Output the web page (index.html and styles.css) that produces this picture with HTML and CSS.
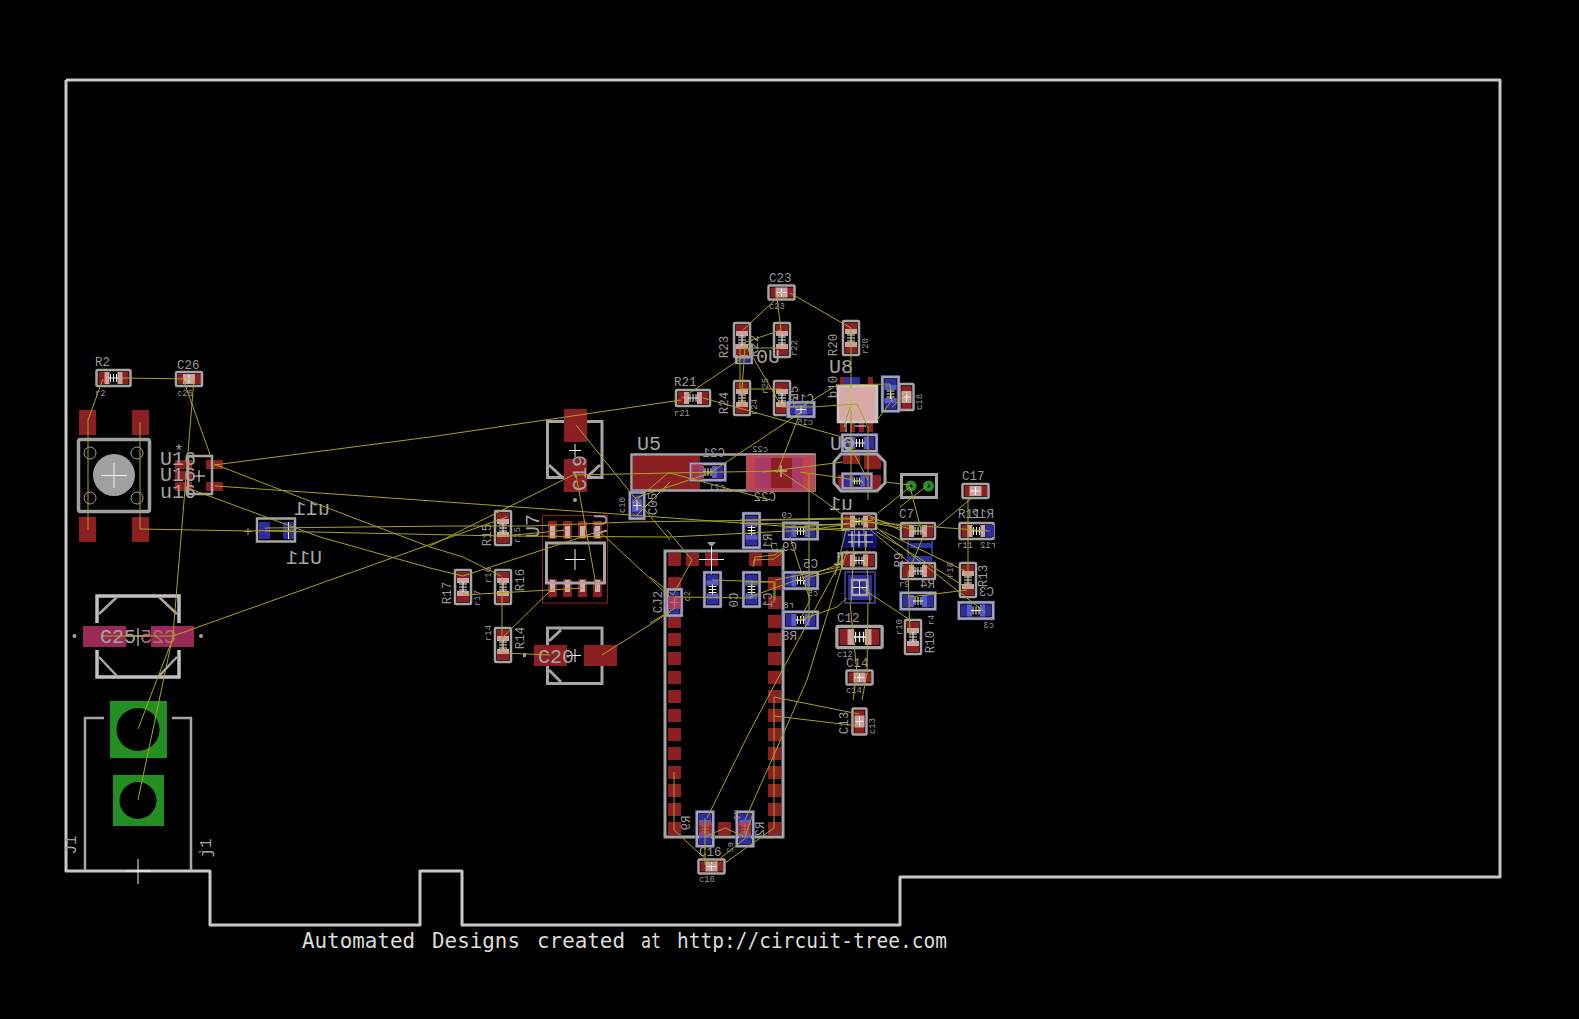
FILE: index.html
```html
<!DOCTYPE html>
<html lang="en">
<head>
<meta charset="utf-8">
<title>Circuit board layout</title>
<link rel="stylesheet" href="styles.css">
</head>
<body>
<svg class="board" width="1579" height="1019" viewBox="0 0 1579 1019" xmlns="http://www.w3.org/2000/svg">
<defs>
  <g id="cross"><path class="wh" d="M-5 0H5M0-4V4"/></g>
  <g id="hash"><path class="wh" d="M-5 0H5M-3-4V4M0-4V4M3-4V4"/></g>
  <g id="r">
    <rect class="red" x="-15" y="-6" width="30" height="12"/>
    <rect class="pnk" x="-9" y="-6" width="18" height="12"/>
    <rect class="blk" x="-4" y="-6" width="8" height="12"/>
    <rect class="sl2" x="-17" y="-8" width="34" height="16" rx="1"/>
    <use href="#hash"/>
  </g>
  <g id="b">
    <rect class="blu" x="-15" y="-6" width="30" height="12"/>
    <rect class="lbl" x="-9" y="-6" width="18" height="12"/>
    <rect class="blk" x="-4" y="-6" width="8" height="12"/>
    <rect class="blo" x="-18" y="-9" width="36" height="18"/>
    <rect class="slb" x="-17" y="-8" width="34" height="16"/>
    <use href="#hash"/>
  </g>
  <g id="c">
    <rect class="red" x="-11" y="-5" width="23" height="10"/>
    <rect class="pnk" x="-6" y="-5" width="12" height="10"/>
    <rect class="sl2" x="-13" y="-7" width="26" height="14" rx="1"/>
    <use href="#cross"/>
  </g>
  <g id="cb">
    <rect class="blu" x="-11" y="-5" width="23" height="10"/>
    <rect class="lbl" x="-6" y="-5" width="12" height="10"/>
    <rect class="blo" x="-14" y="-8" width="28" height="16"/>
    <rect class="slb" x="-13" y="-7" width="26" height="14"/>
    <use href="#cross"/>
  </g>
</defs>

<!-- board outline -->
<polyline class="edge" points="66,80 1500,80 1500,877 900,877 900,925 462,925 462,871 420,871 420,925 210,925 210,871 66,871 66,80"/>

<!-- module footprint pads -->
<g class="red">
  <rect x="668" y="553" width="13" height="13"/><rect x="686" y="553" width="13" height="13"/><rect x="705" y="553" width="13" height="13"/><rect x="749" y="553" width="13" height="13"/><rect x="768" y="553" width="13" height="13"/>
  <rect x="668" y="577" width="13" height="13"/><rect x="668" y="596" width="13" height="13"/><rect x="668" y="615" width="13" height="13"/><rect x="668" y="633" width="13" height="13"/><rect x="668" y="652" width="13" height="13"/><rect x="668" y="671" width="13" height="13"/><rect x="668" y="690" width="13" height="13"/><rect x="668" y="709" width="13" height="13"/><rect x="668" y="728" width="13" height="13"/><rect x="668" y="747" width="13" height="13"/><rect x="668" y="766" width="13" height="13"/><rect x="668" y="784" width="13" height="13"/><rect x="668" y="803" width="13" height="13"/><rect x="668" y="822" width="13" height="13"/>
  <rect x="768" y="577" width="13" height="13"/><rect x="768" y="596" width="13" height="13"/><rect x="768" y="615" width="13" height="13"/><rect x="768" y="633" width="13" height="13"/><rect x="768" y="652" width="13" height="13"/><rect x="768" y="671" width="13" height="13"/><rect x="768" y="690" width="13" height="13"/><rect x="768" y="709" width="13" height="13"/><rect x="768" y="728" width="13" height="13"/><rect x="768" y="747" width="13" height="13"/><rect x="768" y="766" width="13" height="13"/><rect x="768" y="784" width="13" height="13"/><rect x="768" y="803" width="13" height="13"/><rect x="768" y="822" width="13" height="13"/>
  <rect x="718" y="822" width="13" height="13"/>
</g>
<rect class="sl3" x="665" y="551" width="118" height="286"/>
<path class="gfill" d="M707 542h9l-4.500 5z"/>
<path class="sl1" d="M711.500 547V575"/>
<path class="wh" d="M699 559.500H724M711.500 547V572"/>

<!-- push button -->
<g class="red">
  <rect x="79" y="410" width="17" height="25"/><rect x="132" y="410" width="17" height="25"/>
  <rect x="79" y="517" width="17" height="25"/><rect x="132" y="517" width="17" height="25"/>
</g>
<rect class="sl4" x="78.500" y="439.500" width="71" height="72" rx="2"/>
<circle class="gfill" cx="114" cy="475" r="21"/>
<g class="sl1"><circle cx="90" cy="453" r="6"/><circle cx="137" cy="453" r="6"/><circle cx="90" cy="498" r="6"/><circle cx="137" cy="498" r="6"/></g>
<path class="wh" d="M101 475.500H127M114 463V488"/>

<!-- U16 cluster -->
<g class="red">
  <rect x="206" y="460" width="17" height="9"/><rect x="206" y="482" width="17" height="9"/>
  <rect x="175" y="460" width="17" height="9"/><rect x="175" y="471" width="17" height="9"/><rect x="175" y="482" width="17" height="9"/>
</g>
<rect class="sl2" x="188" y="456" width="24" height="38"/>
<path class="wh" d="M193 476H205M199 470V482"/>

<!-- U11 bottom part -->
<rect class="blu" x="259" y="522" width="11" height="17"/><rect class="blu" x="283" y="522" width="11" height="17"/>
<rect class="sl2" x="257" y="518.500" width="38" height="23"/>
<path class="wh" d="M288.500 522V539"/>
<path class="sl1" d="M244 531.500H252M248 528V535"/>

<!-- C25 capacitor -->
<rect class="mag" x="83" y="626" width="43" height="21"/><rect class="mag" x="151" y="626" width="43" height="21"/>
<path class="sl3w" d="M97 623V596H179V623M97 650V677H179V650"/>
<path class="sl2" d="M99 614L117 597M159 597L177 614M99 657L117 676M159 676L177 657"/>
<circle class="gfill" cx="74.500" cy="636" r="2"/><circle class="gfill" cx="201" cy="636" r="2"/>
<path class="wh" d="M126 636H150M138 628V646"/>

<!-- J1 -->
<path class="sl2" d="M85 870V718H104M172 718H191V870"/>
<rect class="grn" x="110" y="701" width="57" height="57"/><circle class="blk" cx="138" cy="729.500" r="21.500"/>
<rect class="grn" x="113" y="775" width="51" height="51"/><circle class="blk" cx="138" cy="800.500" r="18.500"/>
<path class="wh" d="M126 871H151M138 859V884"/>

<!-- C19 / C20 / U7 -->
<path class="sl3" d="M564 421.500H547.500V477.500H564M587 421.500H602V477.500H587M549 465L562 477M600 465L587 477"/>
<rect class="red" x="564" y="409" width="23" height="33"/><rect class="red" x="564" y="459" width="23" height="33"/>
<path class="wh" d="M569 450.500H581M575 444V457"/>
<circle class="gfill" cx="575" cy="500" r="2"/>

<rect class="red1" x="542.500" y="515.500" width="65" height="87.500"/>
<g class="red">
  <rect x="548" y="521" width="9" height="18"/><rect x="563" y="521" width="9" height="18"/><rect x="578" y="521" width="9" height="18"/><rect x="593" y="521" width="9" height="18"/>
  <rect x="548" y="579" width="9" height="18"/><rect x="563" y="579" width="9" height="18"/><rect x="578" y="579" width="9" height="18"/><rect x="593" y="579" width="9" height="18"/>
</g>
<g class="pale">
  <rect x="550" y="526" width="5" height="12"/><rect x="565" y="526" width="5" height="12"/><rect x="580" y="526" width="5" height="12"/><rect x="595" y="526" width="5" height="12"/>
  <rect x="550" y="580" width="5" height="12"/><rect x="565" y="580" width="5" height="12"/><rect x="580" y="580" width="5" height="12"/><rect x="595" y="580" width="5" height="12"/>
</g>
<rect class="sl3" x="546.500" y="543" width="58" height="40"/>
<path class="wh" d="M565 559.500H585M575 549V570"/>

<rect class="red" x="534" y="645" width="33" height="21"/><rect class="red" x="584" y="645" width="33" height="21"/>
<path class="sl3" d="M547.500 645V628H602V645M547.500 666V683.500H602V666M549 641L561 630M549 670L561 682"/>
<path class="wh" d="M569 655.500H581M575 649V662"/>
<rect class="gfill" x="523" y="653" width="3" height="4"/>

<!-- U5 and C22 -->
<rect class="red" x="633" y="456" width="67" height="34"/>
<rect class="sl2" x="631.500" y="454.500" width="183" height="36"/>
<rect class="hot1" x="746" y="455" width="69" height="36"/>
<rect class="hot2" x="750" y="458" width="60" height="31"/>
<rect class="mag2" x="755" y="458" width="17" height="30"/>
<rect class="red" x="771" y="458" width="21" height="30"/>
<rect class="mag2" x="792" y="458" width="11" height="30"/>
<path class="wh" d="M775 471H787M781 465V477"/>

<!-- U8 -->
<g class="red">
  <rect x="840" y="377" width="5" height="8"/><rect x="868" y="377" width="5" height="8"/>
  <rect x="840" y="422" width="5" height="10"/><rect x="850" y="422" width="5" height="10"/><rect x="859" y="422" width="5" height="10"/><rect x="868" y="422" width="5" height="10"/>
</g>
<rect class="blu" x="844" y="377" width="16" height="8"/>
<rect class="pale2" x="838" y="385" width="39" height="37"/>
<rect class="slp" x="838" y="386" width="39" height="36"/>
<path class="wh" d="M846 422V432M855 426H866M851 388V410"/>

<!-- U6 octagon -->
<g class="red">
  <rect x="843" y="455" width="17" height="9"/><rect x="864" y="455" width="17" height="14"/>
  <rect x="838" y="475" width="43" height="15"/>
</g>
<path class="sl3" d="M841 454H877L885 462V483L877 491H841L834 483V462Z"/>

<!-- header J2 -->
<rect class="sl3" x="901.500" y="474.500" width="35" height="23"/>
<circle class="grn" cx="911" cy="486" r="5.500"/><circle class="grn" cx="928.500" cy="486" r="5.500"/>
<circle class="blk" cx="911" cy="486" r="1.500"/><circle class="blk" cx="928.500" cy="486" r="1.500"/>

<!-- labels covered by the parts drawn after them -->
<g class="tl">
  <text transform="translate(853 510) scale(-1 1)">u1</text>
  <text transform="translate(857 565) scale(-1 1)">U1</text>
</g>

<!-- chip parts -->
<use href="#r" transform="translate(113.500 378)"/>
<use href="#c" transform="translate(189 379)"/>
<use href="#c" transform="translate(781.500 292.500)"/>
<use href="#r" transform="translate(503 528) rotate(90)"/>
<use href="#r" transform="translate(463 587) rotate(90)"/>
<use href="#r" transform="translate(503 587) rotate(90)"/>
<use href="#r" transform="translate(503 645) rotate(90)"/>
<use href="#b" transform="translate(744 354) rotate(90) scale(.55 .95)"/>
<use href="#r" transform="translate(742 340) rotate(90)"/>
<use href="#r" transform="translate(782 340) rotate(90)"/>
<use href="#r" transform="translate(851 338) rotate(90)"/>
<use href="#r" transform="translate(693 398)"/>
<use href="#r" transform="translate(742 398) rotate(90)"/>
<use href="#r" transform="translate(782 398) rotate(90)"/>
<use href="#cb" transform="translate(801 409.500)"/>
<use href="#b" transform="translate(890.500 394) rotate(90)"/>
<use href="#c" transform="translate(906.500 397) rotate(90)"/>
<use href="#b" transform="translate(859.500 443)"/>
<use href="#b" transform="translate(857 481) scale(.85 .9)"/>
<use href="#b" transform="translate(708 472)"/>
<rect class="mag3" x="691" y="464" width="12" height="16"/>
<use href="#cb" transform="translate(637 505.500) rotate(90)"/>
<use href="#r" transform="translate(918 531)"/>
<use href="#r" transform="translate(976.500 531)"/>
<rect class="blu" x="985" y="525" width="9" height="12"/>
<use href="#c" transform="translate(975.500 491)"/>
<use href="#r" transform="translate(859 521.500)"/>
<rect class="dot" x="842" y="530" width="35" height="18"/>
<path class="wh" d="M848 535H873M848 542H873M852 531V547M859 531V547M866 531V547"/>
<use href="#r" transform="translate(859 560.500)"/>
<rect class="blo" x="845" y="572" width="30" height="31"/>
<rect class="blu" x="848" y="575" width="24" height="25"/>
<rect class="sl2 blkf" x="852" y="580" width="15" height="15"/>
<path class="wh" d="M852 587.500H867M859.500 580V595"/>
<use href="#r" transform="translate(918 571)"/>
<rect class="blu" x="910" y="543" width="22" height="5"/><rect class="blu" x="907" y="556" width="25" height="6"/>
<path class="blo" d="M908 541V556M932 541V556"/>
<use href="#r" transform="translate(968 580) rotate(90)"/>
<use href="#b" transform="translate(976 610.500)"/>
<use href="#b" transform="translate(918 601)"/>
<use href="#r" transform="translate(913 637) rotate(90)"/>
<use href="#r" transform="translate(859.500 637) scale(1.33 1.33)"/>
<use href="#c" transform="translate(859.500 677.500)"/>
<use href="#c" transform="translate(859.500 721.500) rotate(90)"/>
<use href="#c" transform="translate(711.500 866.500)"/>
<use href="#b" transform="translate(705 829) rotate(90)"/>
<use href="#b" transform="translate(745 829) rotate(90)"/>
<rect class="mag3" x="699" y="822" width="13" height="13"/><rect class="mag3" x="738" y="822" width="13" height="13"/>
<use href="#b" transform="translate(712.500 589.500) rotate(90)"/>
<use href="#b" transform="translate(751.500 589.500) rotate(90)"/>
<use href="#b" transform="translate(751.500 530.500) rotate(90)"/>
<use href="#cb" transform="translate(674.500 602.500) rotate(90)"/>
<rect class="mag3" x="668" y="596" width="13" height="13"/>
<use href="#b" transform="translate(800.500 580.500)"/>
<use href="#b" transform="translate(800.500 620)"/>
<use href="#b" transform="translate(800.500 531)"/>
<circle class="ring" cx="848" cy="443" r="5"/>

<!-- labels -->
<g class="tm">
  <text x="95" y="366">R2</text><text x="177" y="369">C26</text>
  <text x="769" y="282">C23</text><text x="674" y="386">R21</text>
  <text x="899" y="518">C7</text><text x="958" y="518">R11</text>
  <text x="962" y="480">C17</text><text x="837" y="622">C12</text>
  <text x="846" y="667">C14</text><text x="699" y="856">C16</text>
  <text transform="translate(491 535) rotate(-90)" class="mid">R15</text>
  <text transform="translate(451 593) rotate(-90)" class="mid">R17</text>
  <text transform="translate(524 580) rotate(-90)" class="mid">R16</text>
  <text transform="translate(524 638) rotate(-90)" class="mid">R14</text>
  <text transform="translate(662 602) rotate(-90)" class="mid">CJ2</text>
  <text transform="translate(728 347) rotate(-90)" class="mid">R23</text>
  <text transform="translate(728 403) rotate(-90)" class="mid">R24</text>
  <text transform="translate(837 345) rotate(-90)" class="mid">R20</text>
  <text transform="translate(798 397) rotate(-90)" class="mid">R25</text>
  <text transform="translate(758 346) rotate(-90)" class="mid">R22</text>
  <text transform="translate(848 723) rotate(-90)" class="mid">C13</text>
  <text transform="translate(987 576) rotate(-90)" class="mid">R13</text>
  <text transform="translate(934 642) rotate(-90)" class="mid">R10</text>
  <text transform="translate(657 504) rotate(-90)" class="mid">C05</text>
  <text transform="translate(837 387) rotate(-90)" class="mid">b10</text>
  <text transform="translate(994 518) scale(-1 1)">R12</text>
  <text transform="translate(818 568) scale(-1 1)">C5</text>
  <text transform="translate(797 551) scale(-1 1)">C9</text>
  <text transform="translate(797 640) scale(-1 1)">R8</text>
  <text transform="translate(994 596) scale(-1 1)">C3</text>
  <text transform="translate(935 588) scale(-1 1)">R4</text>
  <text transform="translate(814 403) scale(-1 1)">C15</text>
  <text transform="translate(725 457) scale(-1 1)">C21</text>
  <text transform="translate(776 501) scale(-1 1)">C22</text>
  <text transform="translate(690 823) rotate(-90) scale(-1 1)" class="mid">R9</text>
  <text transform="translate(764 829) rotate(-90) scale(-1 1)" class="mid">R2</text>
  <text transform="translate(772 541) rotate(-90) scale(-1 1)" class="mid">R1</text>
  <text transform="translate(772 600) rotate(-90) scale(-1 1)" class="mid">C1</text>
  <text transform="translate(738 600) rotate(-90) scale(-1 1)" class="mid">C0</text>
  <text transform="translate(903 560) rotate(-90)" class="mid">R9</text>
</g>
<g class="ts">
  <text x="95" y="396">r2</text><text x="177" y="396">c26</text>
  <text x="769" y="309">c23</text><text x="674" y="416">r21</text>
  <text x="957" y="548">r11</text><text x="899" y="587">r9</text>
  <text x="837" y="657">c12</text><text x="846" y="693">c14</text>
  <text x="699" y="882">c16</text>
  <text transform="translate(520 535) rotate(-90)" class="mid">r15</text>
  <text transform="translate(480 598) rotate(-90)" class="mid">r17</text>
  <text transform="translate(491 575) rotate(-90)" class="mid">r16</text>
  <text transform="translate(491 633) rotate(-90)" class="mid">r14</text>
  <text transform="translate(690 596) rotate(-90)" class="mid">c2</text>
  <text transform="translate(797 348) rotate(-90)" class="mid">r22</text>
  <text transform="translate(868 346) rotate(-90)" class="mid">r20</text>
  <text transform="translate(757 407) rotate(-90)" class="mid">r24</text>
  <text transform="translate(768 386) rotate(-90)" class="mid">r25</text>
  <text transform="translate(922 402) rotate(-90)" class="mid">c18</text>
  <text transform="translate(953 570) rotate(-90)" class="mid">r18</text>
  <text transform="translate(902 627) rotate(-90)" class="mid">r10</text>
  <text transform="translate(875 726) rotate(-90)" class="mid">c13</text>
  <text transform="translate(625 505) rotate(-90)" class="mid">c10</text>
  <text transform="translate(934 620) rotate(-90)" class="mid">r4</text>
  <text transform="translate(996 548) scale(-1 1)">r12</text>
  <text transform="translate(792 518) scale(-1 1)">c9</text>
  <text transform="translate(818 596) scale(-1 1)">c5</text>
  <text transform="translate(794 608) scale(-1 1)">r8</text>
  <text transform="translate(994 628) scale(-1 1)">c3</text>
  <text transform="translate(813 425) scale(-1 1)">c15</text>
  <text transform="translate(725 490) scale(-1 1)">c21</text>
  <text transform="translate(768 452) scale(-1 1)">c22</text>
  <text transform="translate(734 815) rotate(90)" class="mid">a1</text>
  <text transform="translate(733 842) rotate(-90) scale(-1 1)">e2</text>
  <text transform="translate(772 547) rotate(90)" class="mid">r1</text>
</g>
<g class="tl">
  <text x="637" y="450">U5</text><text x="829" y="373">U8</text><text x="830" y="450">U6</text>
  <text x="160" y="465">U16</text><text x="160" y="481">U16</text><text x="160" y="498">u16</text>
  <text x="174" y="456" class="t16">*</text>
  <text transform="translate(322 564) scale(-1 1)">U11</text>
  <text transform="translate(330 515) scale(-1 1)">u11</text>
  <text x="100" y="643">C25</text><text x="538" y="663">C20</text>
  <text transform="translate(586 473) rotate(-90)" class="mid">C19</text>
  <text transform="translate(539 526) rotate(-90)" class="mid">U7</text>
  <text transform="translate(607 526) rotate(-90) scale(-1 1)" class="mid">U7</text>
  <text transform="translate(76 845) rotate(-90)" class="mid t16">J1</text>
  <text transform="translate(211 848) rotate(-90)" class="mid t16">j1</text>
  <text transform="translate(780 363) scale(-1 1)">U0</text>
</g>
<text transform="translate(176 643) scale(-1 1)" class="tpk">C25</text>

<!-- air wires -->
<g class="air">
  <polyline points="122,378 194,379"/>
  <polyline points="103,379 88,420 88,530"/>
  <polyline points="140,422 140,529 248,531 295,530"/>
  <polyline points="194,379 173,635 138,800"/>
  <polyline points="183,379 212,460"/>
  <polyline points="138,729 171,643"/>
  <polyline points="103,636 173,636 507,517"/>
  <polyline points="214,465 430,437 681,400"/>
  <polyline points="703,398 757,413 842,437"/>
  <polyline points="214,464 320,505 430,547 463,557 501,576"/>
  <polyline points="215,486 320,493 517,507 630,515 850,531"/>
  <polyline points="185,487 320,537 430,568 463,576"/>
  <polyline points="265,528 450,526 530,526 630,522 850,519"/>
  <polyline points="265,531 503,536 670,537 850,528"/>
  <polyline points="430,546 573,475 670,473 770,500"/>
  <polyline points="463,576 600,531"/>
  <polyline points="576,425 630,492 670,540"/>
  <polyline points="576,475 597,590"/>
  <polyline points="600,532 670,597"/>
  <polyline points="502,577 502,653 550,655"/>
  <polyline points="463,595 583,588"/>
  <polyline points="503,637 553,588"/>
  <polyline points="602,655 670,612"/>
  <polyline points="503,536 547,532 567,530"/>
  <polyline points="633,503 668,473 780,471"/>
  <polyline points="637,515 670,482"/>
  <polyline points="682,398 742,358"/>
  <polyline points="743,330 777,298 782,292"/>
  <polyline points="777,298 781,330 743,343"/>
  <polyline points="741,348 781,348"/>
  <polyline points="790,293 851,328 851,493"/>
  <polyline points="740,348 740,389 782,389"/>
  <polyline points="745,348 742,389 742,407"/>
  <polyline points="747,347 782,407 812,407 857,404 868,427 868,500"/>
  <polyline points="800,408 837,385 890,384 892,402"/>
  <polyline points="850,407 844,427"/>
  <polyline points="800,413 777,473"/>
  <polyline points="800,413 710,473 635,498"/>
  <polyline points="763,472 843,462"/>
  <polyline points="800,472 843,478 863,482"/>
  <polyline points="885,482 910,485"/>
  <polyline points="847,440 868,480"/>
  <polyline points="890,403 877,420"/>
  <polyline points="907,393 892,407"/>
  <polyline points="780,471 823,500 843,515"/>
  <polyline points="878,513 910,487"/>
  <polyline points="928,485 900,507"/>
  <polyline points="910,487 923,537 908,573 910,637"/>
  <polyline points="973,497 937,527"/>
  <polyline points="968,497 968,588"/>
  <polyline points="740,520 847,518 900,528"/>
  <polyline points="740,523 843,525"/>
  <polyline points="783,528 853,523"/>
  <polyline points="810,530 873,520"/>
  <polyline points="867,522 990,531"/>
  <polyline points="867,527 918,570"/>
  <polyline points="877,532 967,588"/>
  <polyline points="877,528 985,612"/>
  <polyline points="880,530 967,572"/>
  <polyline points="868,515 900,530"/>
  <polyline points="870,518 918,531"/>
  <polyline points="790,537 810,600 800,620"/>
  <polyline points="809,473 809,620"/>
  <polyline points="750,597 843,563"/>
  <polyline points="745,582 775,582 775,600"/>
  <polyline points="753,567 755,557 775,555 783,548"/>
  <polyline points="800,620 837,607 847,598"/>
  <polyline points="810,577 845,568"/>
  <polyline points="860,587 910,620"/>
  <polyline points="850,603 857,673 853,700"/>
  <polyline points="868,603 867,673 862,700"/>
  <polyline points="910,597 967,590"/>
  <polyline points="843,557 777,680 748,735 707,818"/>
  <polyline points="847,550 807,680 773,757 745,820"/>
  <polyline points="774,697 774,828 725,863"/>
  <polyline points="774,697 859,714"/>
  <polyline points="774,716 859,726"/>
  <polyline points="674,772 674,830 712,865"/>
  <polyline points="705,818 705,865"/>
  <polyline points="705,837 725,828 745,837 753,813"/>
  <polyline points="748,836 712,865"/>
  <polyline points="712,580 773,582"/>
  <polyline points="675,597 752,598"/>
  <polyline points="752,580 752,598"/>
  <polyline points="774,582 774,603"/>
  <polyline points="754,565 754,560 774,559 783,552"/>
  <polyline points="650,577 673,595 692,560 667,530"/>
  <polyline points="650,623 675,608"/>
  <polyline points="775,580 840,567"/>
  <polyline points="855,520 851,603"/>
  <polyline points="863,520 870,603"/>
  <polyline points="846,530 835,575"/>
</g>

<g class="foot">
  <text x="302" y="947.500" textLength="113" lengthAdjust="spacingAndGlyphs">Automated</text>
  <text x="432" y="947.500" textLength="88" lengthAdjust="spacingAndGlyphs">Designs</text>
  <text x="537" y="947.500" textLength="88" lengthAdjust="spacingAndGlyphs">created</text>
  <text x="641" y="947.500" textLength="20" lengthAdjust="spacingAndGlyphs">at</text>
  <text x="677" y="947.500" textLength="270" lengthAdjust="spacingAndGlyphs">http://circuit-tree.com</text>
</g>
</svg>
</body>
</html>
```
FILE: styles.css
```css
html, body { margin: 0; padding: 0; background: #000; }
.board { display: block; background: #000; }

.edge { fill: none; stroke: #c8c8c8; stroke-width: 3; stroke-linejoin: round; }
.red { fill: #8c1f22; }
.red1 { fill: none; stroke: #8c1f22; stroke-width: 1; }
.pnk { fill: #cc9fa0; }
.pale { fill: #c9b0b0; }
.pale2 { fill: #d8a9a9; }
.blk { fill: #000; }
.blkf { fill: #000; }
.blu { fill: #2d2da0; }
.lbl { fill: #5a5ac6; }
.grn { fill: #238f23; }
.mag { fill: #9a2a55; }
.mag2 { fill: #a83a66; }
.mag3 { fill: #b8394a; fill-opacity: .75; }
.hot1 { fill: #b84a58; }
.hot2 { fill: #c2404c; }
.gfill { fill: #a0a0a0; }
.dot { fill: #12126a; }
.ring { fill: none; stroke: #a9a9b8; stroke-width: 2; }

.sl1 { fill: none; stroke: #a0a0a0; stroke-width: 1; }
.sl2 { fill: none; stroke: #a8a4a4; stroke-width: 2.500; }
.sl3 { fill: none; stroke: #a4a4a4; stroke-width: 3; }
.sl4 { fill: none; stroke: #a0a0a0; stroke-width: 3.500; }
.sl3w { fill: none; stroke: #c0c0c0; stroke-width: 3.500; }
.slb { fill: none; stroke: #a3a3b3; stroke-width: 2.500; }
.slp { fill: none; stroke: #c8c8c8; stroke-width: 2.500; }
.blo { fill: none; stroke: #4545b8; stroke-width: 1.500; }
.wh { fill: none; stroke: #f0f0f0; stroke-width: 1; }

.air { fill: none; stroke: #a8a21f; stroke-width: 1; }

.tm, .ts, .tl, .tpk { font-family: "Liberation Mono", "DejaVu Sans Mono", monospace; }
.tm { font-size: 12.500px; fill: #979797; }
.ts { font-size: 8.800px; fill: #979797; }
.tl { font-size: 20px; fill: #a4a4a4; }
.tl .t16 { font-size: 16px; }
.tpk { font-size: 20px; fill: #b06a80; }
.mid { text-anchor: middle; }
.foot { font-family: "DejaVu Sans Mono", "Liberation Mono", monospace; font-size: 20.600px; fill: #dcdcdc; }
```
